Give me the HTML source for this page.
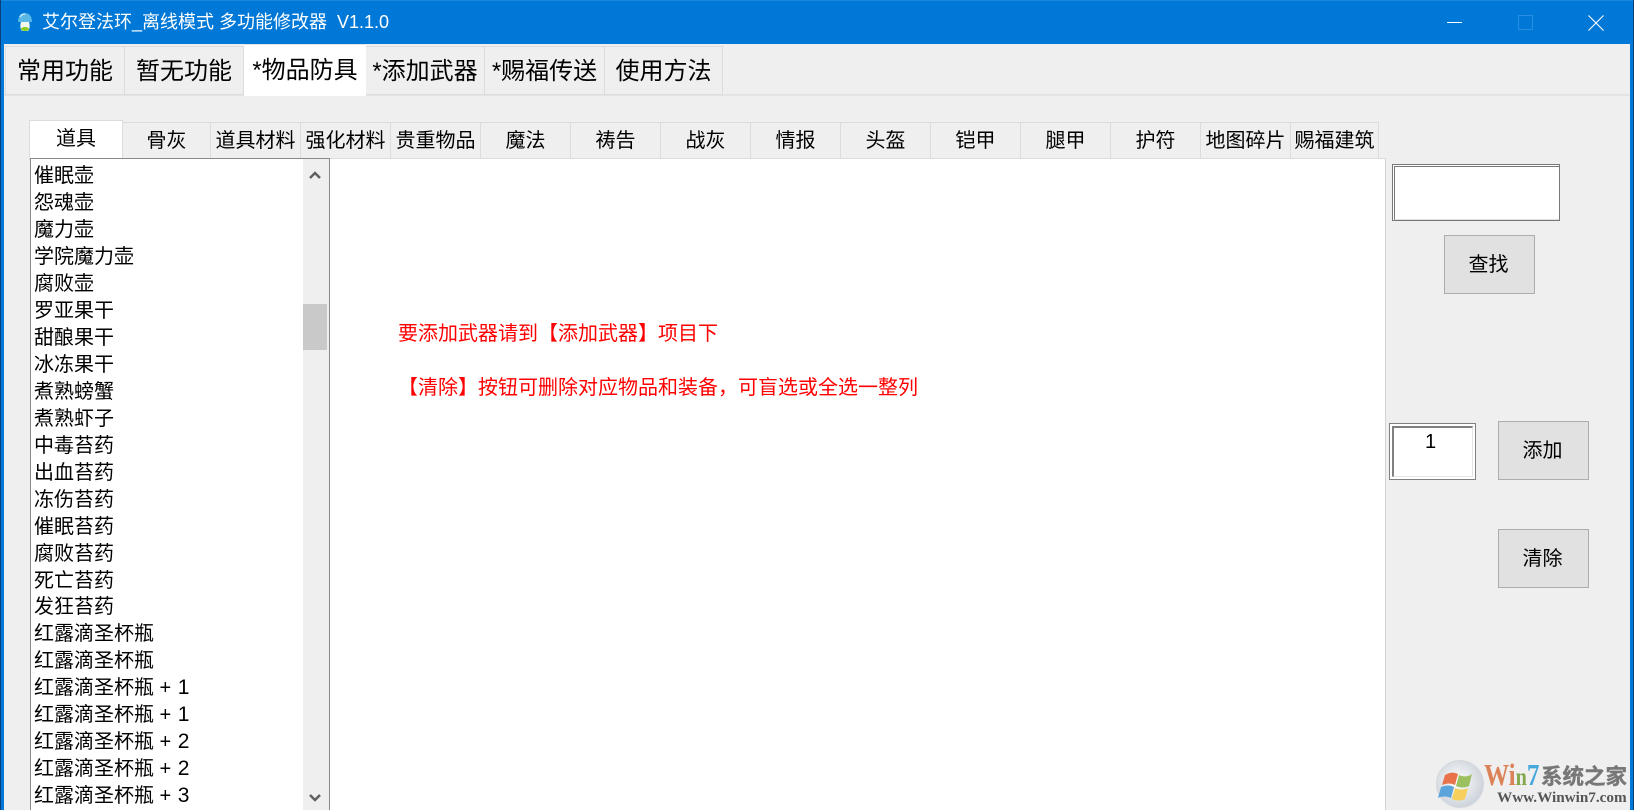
<!DOCTYPE html>
<html><head><meta charset="utf-8"><style>
html,body{margin:0;padding:0;width:1634px;height:810px;overflow:hidden;background:#efefef}
body{position:relative;font-family:"Liberation Sans","Noto Sans CJK SC",sans-serif;color:#000}
div,span.a{position:absolute;box-sizing:border-box}
.t{text-align:center;white-space:nowrap;background:#efefef;border:1px solid #dcdcdc;border-left:0}
.m{top:46px;height:49px;font-size:24px;line-height:49px}
.s{top:122px;height:37px;font-size:20px;line-height:37px}
.sel{background:#fff;z-index:3}
.r{left:34px;font-size:20px;line-height:27px;height:27px;white-space:nowrap;width:265px;margin-top:2px}
.r b{font-weight:normal;font-size:21px;margin-left:1px;line-height:0}
.b{background:#e1e1e1;border:1px solid #adadad;text-align:center;font-size:20px;z-index:2;padding-right:2px}
.red{color:#f00;font-size:20px;white-space:nowrap;left:398px;line-height:27px;z-index:2}
</style></head><body>
<div style="left:0;top:0;width:1634px;height:44px;background:#0078d7;border-top:1px solid #1a86dc"></div>
<div style="left:0;top:0;width:1px;height:810px;background:#0a3f78;z-index:9"></div>
<div style="left:1px;top:44px;width:3px;height:766px;background:#0078d7;z-index:9"></div>
<div style="left:1630px;top:44px;width:3px;height:766px;background:#0078d7;z-index:9"></div>
<div style="left:1633px;top:0;width:1px;height:810px;background:#0a3f78;z-index:9"></div>
<svg style="position:absolute;left:15px;top:11px" width="22" height="22" viewBox="0 0 22 22">
<path d="M3 11C3 5 6 2 10 2s7 3 7 9z" fill="#59b7e6"/><path d="M5 6c1-2 3-3 5-3" stroke="#c4e8f8" stroke-width="1.5" fill="none"/>
<path d="M6 11h8c1 3 1 7-1 9H7c-2-2-2-6-1-9z" fill="#f5f7ef"/><ellipse cx="10" cy="18" rx="4" ry="2" fill="#88cc22"/></svg>
<div style="left:42px;top:9px;color:#fff;font-size:18px;line-height:27px;white-space:pre">艾尔登法环_离线模式 多功能修改器  V1.1.0</div>
<div style="left:1447px;top:22px;width:15px;height:1px;background:#fff"></div>
<div style="left:1518px;top:15px;width:15px;height:15px;border:1px solid #2a8fe2"></div>
<svg style="position:absolute;left:1588px;top:15px" width="16" height="16" viewBox="0 0 16 16"><path d="M.5.5l15 15M15.500.5l-15 15" stroke="#fff" stroke-width="1.100"/></svg>

<div style="left:4px;top:94px;width:1626px;height:2px;background:#e4e4e4"></div>
<div class="t m" style="left:5px;width:120px;border-left:1px solid #dcdcdc">常用功能</div>
<div class="t m" style="left:125px;width:119px">暂无功能</div>
<div class="t m sel" style="left:244px;width:122px;top:44px;height:52px;line-height:51px;border:0;border-top:1px solid #e4e4e4">*物品防具</div>
<div class="t m" style="left:366px;width:119px">*添加武器</div>
<div class="t m" style="left:485px;width:120px">*赐福传送</div>
<div class="t m" style="left:605px;width:118px">使用方法</div>

<div style="left:30px;top:158px;width:1356px;height:652px;background:#fff;border-right:1px solid #d4d4d4;border-top:1px solid #dcdcdc"></div>
<div class="t s sel" style="left:29px;width:94px;top:120px;height:40px;line-height:37px;border:1px solid #dcdcdc;border-bottom:0">道具</div>
<div class="t s" style="left:123px;width:88px">骨灰</div>
<div class="t s" style="left:211px;width:90px">道具材料</div>
<div class="t s" style="left:301px;width:90px">强化材料</div>
<div class="t s" style="left:391px;width:90px">贵重物品</div>
<div class="t s" style="left:481px;width:90px">魔法</div>
<div class="t s" style="left:571px;width:90px">祷告</div>
<div class="t s" style="left:661px;width:90px">战灰</div>
<div class="t s" style="left:751px;width:90px">情报</div>
<div class="t s" style="left:841px;width:90px">头盔</div>
<div class="t s" style="left:931px;width:90px">铠甲</div>
<div class="t s" style="left:1021px;width:90px">腿甲</div>
<div class="t s" style="left:1111px;width:90px">护符</div>
<div class="t s" style="left:1201px;width:90px">地图碎片</div>
<div class="t s" style="left:1291px;width:88px">赐福建筑</div>

<div style="left:30px;top:158px;width:300px;height:652px;background:#fff;border:1px solid #8a8a8a;border-bottom:0;z-index:4"></div>
<div style="left:303px;top:159px;width:26px;height:651px;background:#efefef;z-index:5"></div>
<div style="left:303px;top:304px;width:24px;height:46px;background:#c9c9c9;z-index:6"></div>
<svg style="position:absolute;left:309px;top:170px;z-index:6" width="12" height="10" viewBox="0 0 12 10"><path d="M1 8l5-5 5 5" stroke="#606060" stroke-width="2.500" fill="none"/></svg>
<svg style="position:absolute;left:309px;top:793px;z-index:6" width="12" height="10" viewBox="0 0 12 10"><path d="M1 2l5 5 5-5" stroke="#606060" stroke-width="2.500" fill="none"/></svg>
<div style="left:0;top:0;z-index:7;width:300px;height:810px">
<div class="r" style="top:161px">催眠壶</div>
<div class="r" style="top:188px">怨魂壶</div>
<div class="r" style="top:215px">魔力壶</div>
<div class="r" style="top:242px">学院魔力壶</div>
<div class="r" style="top:269px">腐败壶</div>
<div class="r" style="top:296px">罗亚果干</div>
<div class="r" style="top:323px">甜酿果干</div>
<div class="r" style="top:350px">冰冻果干</div>
<div class="r" style="top:377px">煮熟螃蟹</div>
<div class="r" style="top:404px">煮熟虾子</div>
<div class="r" style="top:431px">中毒苔药</div>
<div class="r" style="top:458px">出血苔药</div>
<div class="r" style="top:485px">冻伤苔药</div>
<div class="r" style="top:512px">催眠苔药</div>
<div class="r" style="top:539px">腐败苔药</div>
<div class="r" style="top:566px">死亡苔药</div>
<div class="r" style="top:592px">发狂苔药</div>
<div class="r" style="top:619px">红露滴圣杯瓶</div>
<div class="r" style="top:646px">红露滴圣杯瓶</div>
<div class="r" style="top:673px">红露滴圣杯瓶 + <b>1</b></div>
<div class="r" style="top:700px">红露滴圣杯瓶 + <b>1</b></div>
<div class="r" style="top:727px">红露滴圣杯瓶 + <b>2</b></div>
<div class="r" style="top:754px">红露滴圣杯瓶 + <b>2</b></div>
<div class="r" style="top:781px">红露滴圣杯瓶 + <b>3</b></div>
</div>

<div class="red" style="top:321px">要添加武器请到【添加武器】项目下</div>
<div class="red" style="top:375px">【清除】按钮可删除对应物品和装备，可盲选或全选一整列</div>

<div style="left:1392px;top:164px;width:168px;height:57px;background:#fff;border:1px solid #787878"></div>
<div style="left:1394px;top:166px;width:165px;height:54px;background:#fff;border:1px solid #787878;border-right:0;border-bottom:1px solid #e0e0e0"></div>
<div class="b" style="left:1444px;top:235px;width:91px;height:59px;line-height:58px">查找</div>

<div style="left:1389px;top:423px;width:87px;height:57px;background:#fff;border:1px solid #808080"></div>
<div style="left:1392px;top:426px;width:81px;height:51px;background:#fff;border:2px solid #808080;border-right:1px solid #e4e4e4;border-bottom:1px solid #e4e4e4;text-align:center;font-size:20px;line-height:28px;padding-right:5px">1</div>
<div class="b" style="left:1498px;top:421px;width:91px;height:59px;line-height:58px">添加</div>
<div class="b" style="left:1498px;top:529px;width:91px;height:59px;line-height:58px">清除</div>

<svg style="position:absolute;left:1436px;top:760px;z-index:5" width="48" height="48" viewBox="0 0 48 48">
<defs><radialGradient id="g" cx=".45" cy=".45" r=".6"><stop offset="0" stop-color="#fff"/><stop offset="1" stop-color="#c9d0d8"/></radialGradient></defs>
<circle cx="24" cy="24" r="23.500" fill="url(#g)" stroke="#d4d8dc"/>
<path d="M9 15c5-3 9-3 13-1l-3 11c-4-2-8-2-13 0z" fill="#e8734a"/>
<path d="M23 15c4 2 9 2 13-1l-3 12c-4 2-9 2-13 0z" fill="#9cc060"/>
<path d="M5 27c5-2 9-2 13 0l-3 11c-4-2-9-2-13 0z" fill="#5ba4dc"/>
<path d="M19 28c4 2 9 2 13 0l-3 11c-4 2-9 2-13 0z" fill="#f6cf5c"/></svg>
<div style="left:1484px;top:760px;font:bold 31px/30px 'Liberation Serif',serif;white-space:nowrap;z-index:5;transform:scaleX(.81);transform-origin:0 0"><span style="color:#dc8258">Wi</span><span style="color:#85a84e;font-size:25px">n</span><span style="color:#45a9dc">7</span></div>
<div style="left:1541px;top:761px;font:bold 21.500px/30px 'Noto Sans CJK SC',sans-serif;color:#777;white-space:nowrap;z-index:5;-webkit-text-stroke:.4px #777">系统之家</div>
<div style="left:1497px;top:789px;font:bold 15.200px/17px 'Liberation Serif',serif;color:#555;white-space:nowrap;z-index:5">Www.Winwin7.com</div>
</body></html>
